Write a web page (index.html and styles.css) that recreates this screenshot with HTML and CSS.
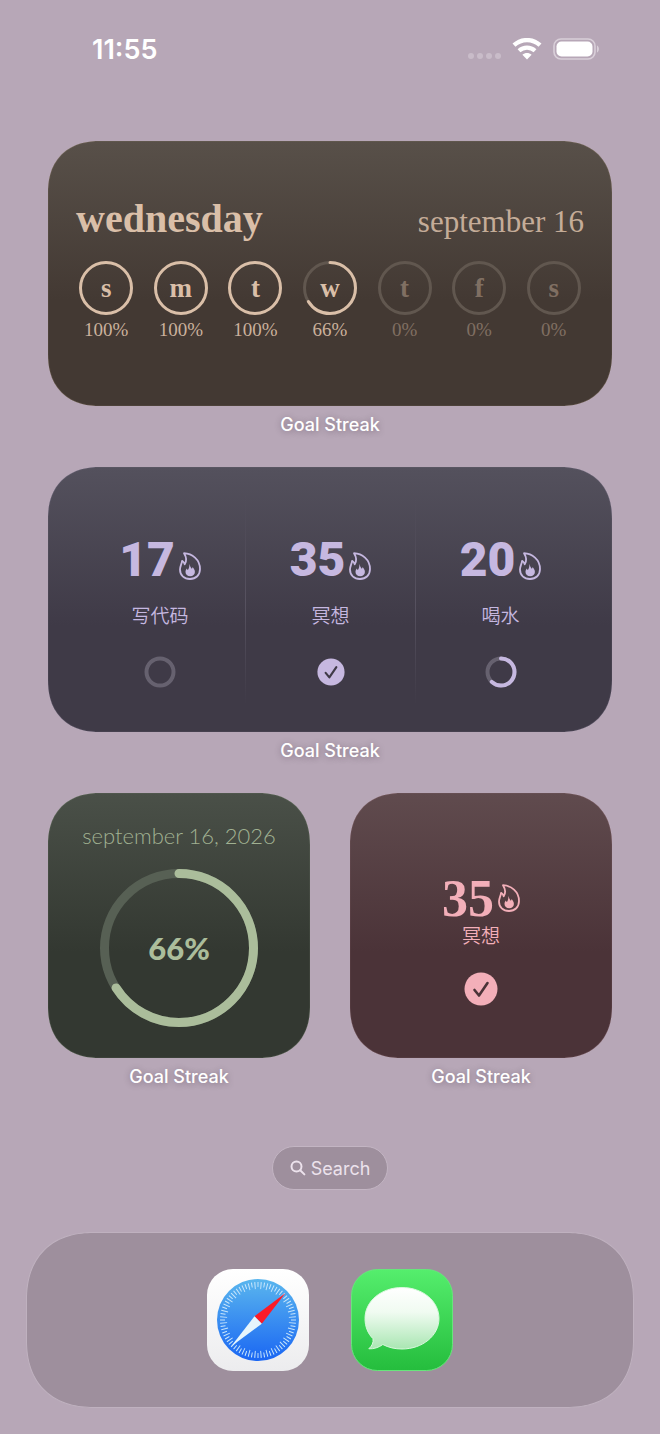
FILE: index.html
```html
<!DOCTYPE html>
<html lang="en">
<head>
    <meta charset="UTF-8">
    <meta name="viewport" content="width=device-width, initial-scale=1.0">
    <title>Goal Streak - Home Screen</title>
    <link rel="stylesheet" href="styles.css">
</head>
<body>
    <!-- shared icons -->
    <svg class="icons" aria-hidden="true">
        <symbol id="flame" viewBox="0 0 22 28">
            <path d="M5 1.2C13 1.6 21 7.5 21 17C21 23 17 27 11 27C5 27 1 23.2 1 17.6C1 14.3 2.6 12.4 3.1 8.8C4.6 9.6 5.4 10.8 5.7 12.3C7.6 9.4 7.4 5 5 1.2Z" fill="none" stroke="currentColor" stroke-width="1.8" stroke-linejoin="round"/>
            <path d="M10.2 11.8C11.3 14.2 11.6 15.6 12.8 16.8C13.3 16.3 13.5 15.7 13.6 15.1C15 16.8 15.9 18.2 15.9 20C15.9 22.7 13.9 24.2 11.2 24.2C8.5 24.2 6.5 22.5 6.5 20C6.5 18.4 7.1 17.4 7.8 16.4C8.1 17.1 8.4 17.6 8.9 17.9C10.2 16.2 10.6 14.2 10.2 11.8Z" fill="currentColor"/>
        </symbol>
        <symbol id="check" viewBox="0 0 34 34">
            <circle cx="17" cy="17" r="16.5" fill="currentColor"/>
            <path d="M10.500 18L15 23.500L23.500 11" fill="none" stroke="var(--card)" stroke-width="2.6" stroke-linecap="round" stroke-linejoin="round"/>
        </symbol>
    </svg>

    <header class="status-bar">
        <time class="clock">11:55</time>
        <div class="status-icons">
            <svg class="dots" viewBox="0 0 33 6">
                <circle cx="3" cy="3" r="3"/><circle cx="12" cy="3" r="3"/><circle cx="21" cy="3" r="3"/><circle cx="30" cy="3" r="3"/>
            </svg>
            <svg class="wifi" viewBox="0 0 30 22">
                <path d="M2 7.2C9.500 .4 20.500 .4 28 7.2" fill="none" stroke="#fff" stroke-width="4.4"/>
                <path d="M7 12.800C11.600 8.600 18.400 8.600 23 12.800" fill="none" stroke="#fff" stroke-width="4.200"/>
                <path d="M15 21.4L10.4 16.8C13 14.5 17 14.5 19.6 16.8Z" fill="#fff"/>
            </svg>
            <svg class="battery" viewBox="0 0 47 22">
                <rect x="1" y="1" width="41" height="20" rx="7" fill="none" stroke="#d9cfd9" stroke-width="1.6"/>
                <rect x="3.5" y="3.5" width="36" height="15" rx="5" fill="#fff"/>
                <path d="M44 7.5C46.6 8.6 46.6 13.4 44 14.5Z" fill="#d9cfd9"/>
            </svg>
        </div>
    </header>

    <main class="widgets">
        <figure class="widget wide">
            <div class="card brown">
                <div class="week-head">
                    <h2>wednesday</h2>
                    <p>september 16</p>
                </div>
                <ul class="week">
                    <li>
                        <div class="day">
                            <svg class="ring" viewBox="0 0 54 54"><circle class="fill" cx="27" cy="27" r="25.5" /></svg>
                            <b>s</b>
                        </div>
                        <span>100%</span>
                    </li>
                    <li>
                        <div class="day">
                            <svg class="ring" viewBox="0 0 54 54"><circle class="fill" cx="27" cy="27" r="25.5" /></svg>
                            <b>m</b>
                        </div>
                        <span>100%</span>
                    </li>
                    <li>
                        <div class="day">
                            <svg class="ring" viewBox="0 0 54 54"><circle class="fill" cx="27" cy="27" r="25.5" /></svg>
                            <b>t</b>
                        </div>
                        <span>100%</span>
                    </li>
                    <li>
                        <div class="day">
                            <svg class="ring" viewBox="0 0 54 54">
                                <circle class="track" cx="27" cy="27" r="25.5" />
                                <circle class="fill" cx="27" cy="27" r="25.5" pathLength="100" stroke-dasharray="66 100" />
                            </svg>
                            <b>w</b>
                        </div>
                        <span>66%</span>
                    </li>
                    <li class="future">
                        <div class="day">
                            <svg class="ring" viewBox="0 0 54 54"><circle class="track" cx="27" cy="27" r="25.5" /></svg>
                            <b>t</b>
                        </div>
                        <span>0%</span>
                    </li>
                    <li class="future">
                        <div class="day">
                            <svg class="ring" viewBox="0 0 54 54"><circle class="track" cx="27" cy="27" r="25.5" /></svg>
                            <b>f</b>
                        </div>
                        <span>0%</span>
                    </li>
                    <li class="future">
                        <div class="day">
                            <svg class="ring" viewBox="0 0 54 54"><circle class="track" cx="27" cy="27" r="25.5" /></svg>
                            <b>s</b>
                        </div>
                        <span>0%</span>
                    </li>
                </ul>
            </div>
            <figcaption>Goal Streak</figcaption>
        </figure>

        <figure class="widget wide">
            <div class="card purple">
                <div class="goals">
                    <div class="goal">
                        <div class="count"><strong>17</strong><svg class="flame"><use href="#flame"/></svg></div>
                        <p lang="zh">写代码</p>
                        <div class="state">
                            <svg class="ring mini" viewBox="0 0 32 32"><circle class="track" cx="16" cy="16" r="13.5" /></svg>
                        </div>
                    </div>
                    <div class="goal">
                        <div class="count"><strong>35</strong><svg class="flame"><use href="#flame"/></svg></div>
                        <p lang="zh">冥想</p>
                        <div class="state">
                            <svg class="check"><use href="#check"/></svg>
                        </div>
                    </div>
                    <div class="goal">
                        <div class="count"><strong>20</strong><svg class="flame"><use href="#flame"/></svg></div>
                        <p lang="zh">喝水</p>
                        <div class="state">
                            <svg class="ring mini" viewBox="0 0 32 32">
                                <circle class="track" cx="16" cy="16" r="13.5" />
                                <circle class="fill" cx="16" cy="16" r="13.5" pathLength="100" stroke-dasharray="62 100" />
                            </svg>
                        </div>
                    </div>
                </div>
            </div>
            <figcaption>Goal Streak</figcaption>
        </figure>

        <figure class="widget">
            <div class="card green">
                <p class="date">september 16, 2026</p>
                <div class="progress">
                    <svg class="ring big" viewBox="0 0 158 158">
                        <circle class="track" cx="79" cy="79" r="74.5" />
                        <circle class="fill" cx="79" cy="79" r="74.5" pathLength="100" stroke-dasharray="66 100" />
                    </svg>
                    <strong>66%</strong>
                </div>
            </div>
            <figcaption>Goal Streak</figcaption>
        </figure>

        <figure class="widget">
            <div class="card red">
                <div class="count"><strong>35</strong><svg class="flame"><use href="#flame"/></svg></div>
                <p class="name" lang="zh">冥想</p>
                <svg class="check"><use href="#check"/></svg>
            </div>
            <figcaption>Goal Streak</figcaption>
        </figure>
    </main>

    <button class="search" type="button">
        <svg viewBox="0 0 16 16">
            <circle cx="6.5" cy="6.5" r="5" /><path d="M10.2 10.2L14.4 14.4" />
        </svg>
        Search
    </button>

    <nav class="dock">
        <a href="#safari" aria-label="Safari">
            <svg viewBox="0 0 102 102">
                <defs>
                    <linearGradient id="paper" x1="0" y1="0" x2="0" y2="1"><stop offset="0" stop-color="#fff"/><stop offset="1" stop-color="#ececee"/></linearGradient>
                    <linearGradient id="sky" x1="0" y1="0" x2="0" y2="1"><stop offset="0" stop-color="#5ab6ee"/><stop offset="1" stop-color="#1a66f3"/></linearGradient>
                </defs>
                <rect width="102" height="102" rx="26" fill="url(#paper)"/>
                <circle cx="51" cy="51" r="41" fill="url(#sky)"/>
                <circle cx="51" cy="51" r="35.5" fill="none" stroke="#c9e6fb" stroke-width="5" pathLength="360" stroke-dasharray="1.6 8.4" stroke-dashoffset="0.8"/>
                <circle cx="51" cy="51" r="34.5" fill="none" stroke="#c9e6fb" stroke-width="7" pathLength="360" stroke-dasharray="1.6 8.4" stroke-dashoffset="-4.2"/>
                <path d="M78.5 24L47.5 47.2L54.8 54.8Z" fill="#fb1b28"/>
                <path d="M24 77.5L47.5 47.2L54.8 54.8Z" fill="#e6f5fc"/>
            </svg>
        </a>
        <a href="#messages" aria-label="Messages">
            <svg viewBox="0 0 102 102">
                <defs>
                    <linearGradient id="leaf" x1="0" y1="0" x2="0" y2="1"><stop offset="0" stop-color="#55ee6d"/><stop offset="1" stop-color="#25bd3d"/></linearGradient>
                    <linearGradient id="bubble" x1="0" y1="0" x2="0" y2="1"><stop offset="0" stop-color="#fff"/><stop offset=".4" stop-color="#f0fbf1"/><stop offset="1" stop-color="#a9e6b2"/></linearGradient>
                </defs>
                <rect x=".5" y=".5" width="101" height="101" rx="26" fill="url(#leaf)" stroke="#66e67b"/>
                <path d="M51 18.500C71.600 18.500 88 32 88 49.500C88 66.500 71.600 80 51 80C44 80 37.500 78.500 31.800 75.500C28 78.500 22.500 80.100 17.800 79.800C21 77 22.600 73.500 22 69.700C16.800 64.500 14 57.500 14 49.500C14 32 30.400 18.500 51 18.500Z" fill="url(#bubble)" stroke="#d9f8dd" stroke-width="1"/>
            </svg>
        </a>
    </nav>
</body>
</html>
```
FILE: styles.css
```css
* {
    box-sizing: border-box;
}
body {
    margin: 0;
    padding: 0 26px 26px;
    background-color: #b7a7b7;
    font-family: Inter, "Liberation Sans", sans-serif;
    color: white;
    display: flex;
    flex-direction: column;
}
h2, p, ul, figure {
    margin: 0;
    padding: 0;
}
svg {
    display: block;
}
.icons {
    position: absolute;
    width: 0;
    height: 0;
}

/* Status bar */
.status-bar {
    height: 98px;
    padding: 0 34px 0 66px;
    display: flex;
    justify-content: space-between;
    align-items: center;
}
.clock {
    font-size: 27px;
    font-weight: 600;
}
.status-icons {
    display: flex;
    align-items: center;
    gap: 11px;
}
.dots {
    width: 33px;
    height: 6px;
    margin-top: 14px;
    fill: #c9bcc9;
}
.wifi {
    width: 30px;
    height: 22px;
}
.battery {
    width: 47px;
    height: 22px;
}

/* Widgets */
.widgets {
    margin: 43px 22px 0;
    display: grid;
    grid-template-columns: 1fr 1fr;
    gap: 31px 40px;
}
.wide {
    grid-column: span 2;
}
.card {
    min-height: 265px;
    border-radius: 46px;
    background-image: linear-gradient(var(--top), var(--card) 60%);
    box-shadow: inset 0 0 1px var(--edge);
    color: var(--accent);
    display: flex;
    flex-direction: column;
}
figcaption {
    margin-top: 8px;
    font-size: 18px;
    line-height: 22px;
    font-weight: 500;
    text-align: center;
    text-shadow: 0 1px 6px rgba(60, 40, 60, 0.4);
}
.brown {
    --top: #585049;
    --card: #433933;
    --edge: #a8957f;
    --accent: #dabfa8;
    --track: #61574f;
    padding-top: 56px;
    font-family: "Liberation Serif", serif;
}
.purple {
    --top: #54515d;
    --card: #3f3a47;
    --edge: #8d859c;
    --accent: #c6b8e0;
    --track: #66616f;
    justify-content: center;
}
.green {
    --top: #4a5048;
    --card: #333831;
    --edge: #8b9a80;
    --accent: #abbd9b;
    --track: #576054;
    align-items: center;
    font-family: Lato, sans-serif;
}
.red {
    --top: #604b4e;
    --card: #4b3338;
    --edge: #a07c80;
    --accent: #f3afb9;
    align-items: center;
}

/* Rings */
.ring {
    width: 54px;
    height: 54px;
    fill: none;
    stroke-width: 3px;
    transform: rotate(-90deg);
}
.ring .track {
    stroke: var(--track);
}
.ring .fill {
    stroke: var(--accent);
    stroke-linecap: round;
}

/* Week */
.week-head {
    padding: 0 28px;
    display: flex;
    justify-content: space-between;
    align-items: baseline;
}
.week-head h2 {
    font-size: 40px;
    line-height: 44px;
}
.week-head p {
    font-size: 31px;
    line-height: 44px;
    opacity: 0.85;
}
.week {
    margin-top: 17px;
    padding: 0 21px;
    list-style: none;
    display: grid;
    grid-template-columns: repeat(7, 1fr);
}
.week li {
    display: flex;
    flex-direction: column;
    align-items: center;
    gap: 4px;
}
.week span {
    font-size: 19px;
    line-height: 22px;
    opacity: 0.9;
}
.day {
    display: grid;
    place-items: center;
}
.day > * {
    grid-area: 1 / 1;
}
.day b {
    font-size: 27px;
    line-height: 28px;
}
.future b, .future span {
    opacity: 0.4;
}

/* Goals */
.goals {
    padding: 0 27px;
    display: grid;
    grid-template-columns: repeat(3, 1fr);
}
.goal {
    height: 208px;
    padding-top: 34px;
    display: flex;
    flex-direction: column;
    align-items: center;
}
.goal + .goal {
    border-left: 1px solid;
    border-image: linear-gradient(transparent, #575260 50%, transparent) 1;
}
.count {
    display: flex;
    align-items: flex-end;
    gap: 4px;
}
.count strong {
    font-family: Roboto, sans-serif;
    font-size: 48px;
    font-weight: 900;
    line-height: 60px;
}
.flame {
    width: 22px;
    height: 28px;
    margin-bottom: 10px;
}
.goal p, .name {
    font-family: "Noto Sans CJK SC", sans-serif;
    font-size: 19px;
    font-weight: 350;
    line-height: 24px;
}
.goal p {
    margin-top: 13px;
}
.state {
    height: 32px;
    margin-top: 29px;
    display: flex;
    align-items: center;
}
.mini {
    width: 32px;
    height: 32px;
    stroke-width: 4px;
}
.check {
    width: 28px;
    height: 28px;
}

/* Small widgets */
.date {
    margin-top: 29px;
    font-size: 22px;
    font-weight: 300;
    line-height: 28px;
    opacity: 0.9;
}
.progress {
    margin-top: 19px;
    display: grid;
    place-items: center;
}
.progress > * {
    grid-area: 1 / 1;
}
.progress strong {
    font-size: 31px;
    font-weight: 900;
}
.big {
    width: 158px;
    height: 158px;
    stroke-width: 9px;
}
.red .count {
    margin-top: 82px;
}
.red .count strong {
    font-family: "Liberation Serif", serif;
    font-size: 52px;
    font-weight: 700;
    line-height: 48px;
}
.red .flame {
    margin-bottom: 11px;
}
.red .check {
    width: 34px;
    height: 34px;
    margin-top: 25px;
}

.search {
    align-self: center;
    height: 44px;
    margin-top: 58px;
    padding: 0 17px;
    border: 1px solid #c3b5c3;
    border-radius: 22px;
    background-color: #9e8f9d;
    color: #ece2ec;
    font-family: inherit;
    font-size: 18px;
    display: flex;
    align-items: center;
    gap: 5px;
}
.search svg {
    width: 16px;
    height: 16px;
    fill: none;
    stroke: currentColor;
    stroke-width: 2px;
    stroke-linecap: round;
}

/* Dock */
.dock {
    margin-top: 42px;
    padding: 36px;
    border: 1px solid #bfb1bf;
    border-radius: 58px;
    background-color: #9e8f9d;
    display: flex;
    justify-content: center;
    gap: 42px;
}
.dock svg {
    width: 102px;
    height: 102px;
}

/* smoother corners where the browser has them */
@supports (corner-shape: squircle) {
    .card {
        border-radius: 52px;
        corner-shape: superellipse(1.2);
    }
    .dock {
        border-radius: 68px;
        corner-shape: superellipse(1.2);
    }
}
```
